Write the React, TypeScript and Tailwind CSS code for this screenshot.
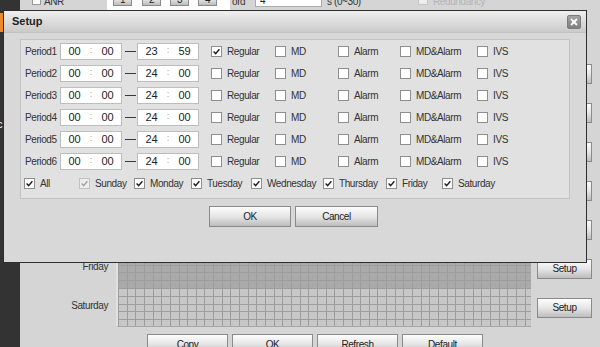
import type React from "react";

function Check({ on, dim }: { on?: boolean; dim?: boolean }) {
  return (
    <span
      className={`flex h-[11px] w-[11px] shrink-0 items-center justify-center border ${
        dim ? "border-[#c2c2c2] bg-[#ededed]" : "border-[#8e8e8e] bg-white"
      }`}
    >
      {on && (
        <svg width="9" height="9" viewBox="0 0 9 9">
          <path
            d="M1.6 4.6 L3.6 6.6 L7.4 2.2"
            fill="none"
            stroke={dim ? "#a3a3a3" : "#1e1e1e"}
            strokeWidth="1.4"
          />
        </svg>
      )}
    </span>
  );
}

function Btn({ children, className }: { children: React.ReactNode; className: string }) {
  return (
    <div
      className={`flex shrink-0 items-center justify-center border border-[#8a8a8a] bg-linear-to-b from-[#fdfdfd] via-[#e6e6e6] to-[#bdbdbd] text-[#222] ${className}`}
    >
      {children}
    </div>
  );
}

function TimeBox({ a, b }: { a: string; b: string }) {
  return (
    <div className="flex h-[17px] w-[62px] shrink-0 items-center border border-[#bdbdbd] bg-white text-[11px] tracking-normal text-[#222]">
      <span className="ml-[1px] w-[25px] text-center">{a}</span>
      <span className="w-[8px] text-center text-[9px] text-[#9a9a9a]">:</span>
      <span className="w-[25px] text-center">{b}</span>
    </div>
  );
}

function Opt({ label, on, w }: { label: string; on?: boolean; w: string }) {
  return (
    <div className={`flex shrink-0 items-center gap-[5px] ${w}`}>
      <Check on={on} />
      <span>{label}</span>
    </div>
  );
}

const periods = [
  { s: ["00", "00"], e: ["23", "59"], on: true },
  { s: ["00", "00"], e: ["24", "00"], on: false },
  { s: ["00", "00"], e: ["24", "00"], on: false },
  { s: ["00", "00"], e: ["24", "00"], on: false },
  { s: ["00", "00"], e: ["24", "00"], on: false },
  { s: ["00", "00"], e: ["24", "00"], on: false },
];

const days = [
  { label: "Sunday", w: "w-[55px]", dim: true },
  { label: "Monday", w: "w-[57px]" },
  { label: "Tuesday", w: "w-[60px]" },
  { label: "Wednesday", w: "w-[72px]" },
  { label: "Thursday", w: "w-[63px]" },
  { label: "Friday", w: "w-[56px]" },
  { label: "Saturday", w: "w-[70px]" },
];

const schedule = ["Sunday", "Monday", "Tuesday", "Wednesday", "Thursday", "Friday", "Saturday"];

export default function App() {
  return (
    <div className="relative flex h-[347px] w-[600px] overflow-hidden bg-[#d5d5d5] font-['Liberation_Sans',Arial,sans-serif] text-[10px] tracking-[-0.4px] text-[#333]">
      {/* Left menu strip */}
      <div className="flex w-[20px] shrink-0 flex-col bg-[#333]">
        <div className="mt-[13px] h-[19px] w-full bg-[#ef8a2a]" />
        <div className="-ml-[3px] mt-[86px] text-[11px] leading-[12px] text-white">c</div>
      </div>

      {/* Page behind the dialog */}
      <div className="flex flex-1 flex-col">
        <div className="flex h-[11px] shrink-0 items-start overflow-hidden">
          <div className="flex w-[87px] shrink-0 items-start">
            <span className="-mt-[4px] ml-[12px] h-[9px] w-[9px] border border-[#999] bg-white" />
            <span className="-mt-[4px] ml-[3px] leading-[11px]">ANR</span>
          </div>
          <div className="flex h-[11px] w-[123px] shrink-0 items-start bg-white">
            {["1", "2", "3", "4"].map((n, i) => (
              <Btn
                key={n}
                className={`-mt-[8px] h-[14px] w-[19px] ${i === 0 ? "ml-[6px]" : i === 1 ? "ml-[10px]" : "ml-[9px]"}`}
              >
                {n}
              </Btn>
            ))}
          </div>
          <div className="w-[25px] shrink-0">
            <span className="-mt-[4px] ml-[2px] block leading-[11px]">ord</span>
          </div>
          <div className="-mt-[8px] h-[15px] w-[67px] shrink-0 border border-[#aaa] bg-white pl-[4px] pt-[2px] leading-[11px] text-[#222]">
            4
          </div>
          <div className="w-[96px] shrink-0">
            <span className="-mt-[4px] ml-[5px] block leading-[11px]">s (0~30)</span>
          </div>
          <div className="flex items-start">
            <span className="-mt-[4px] h-[9px] w-[10px] border border-[#c6c6c6] bg-[#eee]" />
            <span className="-mt-[4px] ml-[5px] leading-[11px] text-[#b4b4b4]">Redundancy</span>
          </div>
        </div>

        <div className="mt-[43px] flex flex-col">
          {schedule.map((d, i) => (
            <div key={d} className="flex h-[39px] items-center">
              <span className="mb-[4px] w-[88px] shrink-0 text-right">{d}</span>
              <div
                className={`ml-[8px] h-full w-[415px] shrink-0 border-l-2 border-l-[#e2e2e2] bg-[image:repeating-linear-gradient(90deg,#9d9d9d_0_1px,transparent_1px_8.65px),repeating-linear-gradient(180deg,#9d9d9d_0_1px,transparent_1px_7.8px)] ${
                  d === "Friday" ? "bg-[#aaaaaa]" : "bg-[#c7c7c7]"
                } ${i === 6 ? "border-b border-b-[#a8a8a8]" : ""}`}
              />
              <Btn className="ml-[6px] h-[20px] w-[55px]">Setup</Btn>
            </div>
          ))}
        </div>

        <div className="mt-[7px] flex gap-[4px] pl-[127px]">
          {["Copy", "OK", "Refresh", "Default"].map((b) => (
            <Btn key={b} className="h-[20px] w-[81px]">
              {b}
            </Btn>
          ))}
        </div>
      </div>

      {/* Setup dialog */}
      <div className="absolute left-[3px] top-[10px] flex h-[253px] w-[584px] flex-col border border-[#2e2e2e] bg-[#d8d8d8]">
        <div className="flex h-[22px] shrink-0 items-center justify-between border-b border-b-[#c2c2c2] bg-linear-to-b from-[#efefef] to-[#cacaca] pl-[8px] pr-[5px]">
          <span className="text-[11px] font-bold tracking-normal text-[#222]">Setup</span>
          <div className="flex h-[14px] w-[14px] items-center justify-center rounded-[2px] border border-[#7b7b7b] bg-linear-to-b from-[#a4a4a4] to-[#7e7e7e]">
            <svg width="8" height="8" viewBox="0 0 8 8">
              <path d="M1 1 L7 7 M7 1 L1 7" stroke="#fff" strokeWidth="1.8" />
            </svg>
          </div>
        </div>

        <div className="ml-[16px] mt-[6px] flex h-[160px] w-[550px] flex-col border border-[#c3c3c3] bg-[#e1e1e1]">
          {periods.map((p, i) => (
            <div key={i} className="flex h-[22px] shrink-0 items-center">
              <span className="w-[39px] shrink-0 pl-[4px]">Period{i + 1}</span>
              <TimeBox a={p.s[0]} b={p.s[1]} />
              <span className="ml-[3px] h-px w-[11px] shrink-0 bg-[#3a3a3a]" />
              <span className="ml-[1px]">
                <TimeBox a={p.e[0]} b={p.e[1]} />
              </span>
              <div className="ml-[12px] flex">
                <Opt label="Regular" on={p.on} w="w-[64px]" />
                <Opt label="MD" w="w-[63px]" />
                <Opt label="Alarm" w="w-[62px]" />
                <Opt label="MD&Alarm" w="w-[77px]" />
                <Opt label="IVS" w="w-[50px]" />
              </div>
            </div>
          ))}
          <div className="flex h-[22px] shrink-0 items-center pl-[3px]">
            <div className="flex w-[55px] shrink-0 items-center gap-[5px]">
              <Check on />
              <span>All</span>
            </div>
            {days.map((d) => (
              <div key={d.label} className={`flex shrink-0 items-center gap-[5px] ${d.w}`}>
                <Check on dim={d.dim} />
                <span>{d.label}</span>
              </div>
            ))}
          </div>
        </div>

        <div className="ml-[205px] mt-[7px] flex gap-[4px]">
          <Btn className="h-[21px] w-[82px]">OK</Btn>
          <Btn className="h-[21px] w-[83px]">Cancel</Btn>
        </div>
      </div>
    </div>
  );
}
